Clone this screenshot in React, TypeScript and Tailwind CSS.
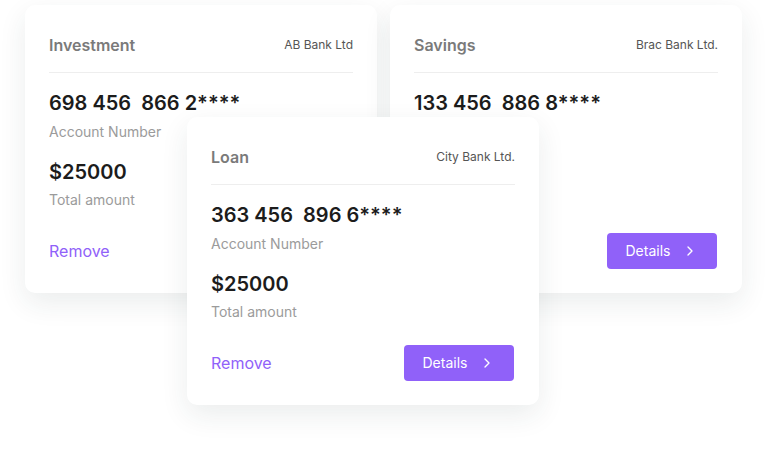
import React from 'react';
import { ChevronRight } from 'lucide-react';

type Account = {
  type: string;
  bank: string;
  number: string;
  amount: string;
};

const accounts: Account[] = [
  { type: 'Investment', bank: 'AB Bank Ltd', number: '698 456  866 2****', amount: '$25000' },
  { type: 'Savings', bank: 'Brac Bank Ltd.', number: '133 456  886 8****', amount: '$25000' },
  { type: 'Loan', bank: 'City Bank Ltd.', number: '363 456  896 6****', amount: '$25000' },
];

function AccountCard({ account }: { account: Account }) {
  return (
    <div className="w-[352px] h-[288px] bg-white rounded-[10px] shadow-[0_10px_28px_rgba(30,50,50,0.09)] px-6 pt-7 pb-6 flex flex-col">
      {/* Header */}
      <div className="flex items-center justify-between h-6">
        <span className="text-base font-semibold text-[#7a7a7a]">{account.type}</span>
        <span className="text-xs text-[#555555]">{account.bank}</span>
      </div>
      <div className="mt-[15px] border-t border-[#eeeeee]" />

      {/* Body */}
      <div className="mt-4 text-xl leading-7 font-semibold text-[#1c1c1c] whitespace-pre">
        {account.number}
      </div>
      <div className="mt-[5px] text-sm leading-5 text-[#9b9b9b]">Account Number</div>
      <div className="mt-4 text-xl leading-7 font-semibold text-[#1c1c1c]">{account.amount}</div>
      <div className="mt-1 text-sm leading-5 text-[#9b9b9b]">Total amount</div>

      {/* Footer */}
      <div className="mt-auto flex items-center justify-between">
        <button className="text-base text-[#9061f9]">Remove</button>
        <button className="w-[110px] h-9 mr-px rounded bg-[#9061f9] text-white text-sm flex items-center justify-center gap-3">
          Details
          <ChevronRight className="w-4 h-4" strokeWidth={2} />
        </button>
      </div>
    </div>
  );
}

export default function App() {
  return (
    <div
      className="relative w-[767px] h-[450px] bg-white overflow-hidden"
      style={{ fontFamily: 'Inter, "Noto Sans", sans-serif' }}
    >
      <div className="flex gap-[13px] pl-[25px] pt-[5px]">
        <AccountCard account={accounts[0]} />
        <AccountCard account={accounts[1]} />
      </div>
      {/* Front card overlapping the two behind */}
      <div className="absolute left-[187px] top-[117px]">
        <AccountCard account={accounts[2]} />
      </div>
    </div>
  );
}
